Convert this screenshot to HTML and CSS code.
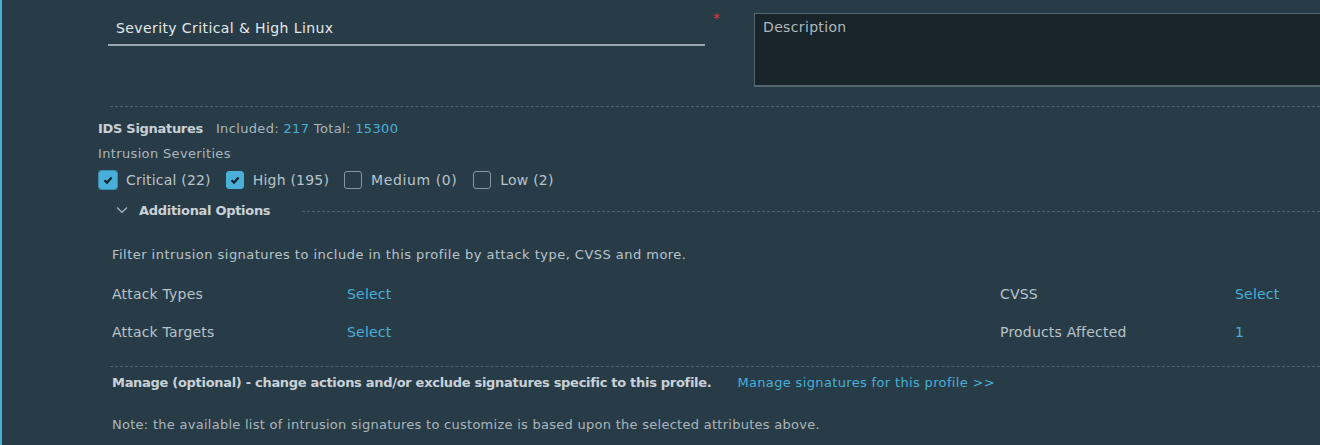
FILE: index.html
```html
<!DOCTYPE html>
<html>
<head>
<meta charset="utf-8">
<link rel="stylesheet" href="styles.css">
</head>
<body>
<div class="page">
  <div class="top">
    <div class="name-field">
      <div class="name-input">Severity Critical &amp; High Linux</div>
    </div>
    <span class="req">*</span>
    <div class="desc">Description</div>
  </div>
  <div class="dash dash-top"></div>

  <div class="ids">
    <div class="ids-head"><span class="ids-title">IDS Signatures</span><span class="ids-count">Included: <span class="num">217</span> Total: <span class="num">15300</span></span></div>
    <div class="sev-label">Intrusion Severities</div>
    <div class="checks">
      <label class="chk"><span class="box on focus"><svg viewBox="0 0 12 12"><path d="M2.5 6.3 L5 8.6 L9.6 3.6" /></svg></span>Critical (22)</label>
      <label class="chk"><span class="box on"><svg viewBox="0 0 12 12"><path d="M2.5 6.3 L5 8.6 L9.6 3.6" /></svg></span>High (195)</label>
      <label class="chk chk-wide"><span class="box"></span>Medium (0)</label>
      <label class="chk"><span class="box"></span>Low (2)</label>
    </div>
    <div class="addl">
      <svg class="chev" viewBox="0 0 12 8"><path d="M1 1.5 L6 6.3 L11 1.5"/></svg>
      <span class="addl-title">Additional Options</span>
      <span class="addl-line"></span>
    </div>
  </div>

  <div class="options">
    <p class="filter">Filter intrusion signatures to include in this profile by attack type, CVSS and more.</p>
    <div class="attrs">
      <span class="attr">Attack Types</span><a class="link">Select</a><span class="attr">CVSS</span><a class="link">Select</a>
      <span class="attr">Attack Targets</span><a class="link">Select</a><span class="attr">Products Affected</span><a class="link">1</a>
    </div>
    <div class="dash dash-manage"></div>
    <div class="manage"><span class="manage-text">Manage (optional) - change actions and/or exclude signatures specific to this profile.</span><a class="link">Manage signatures for this profile &gt;&gt;</a></div>
    <p class="note">Note: the available list of intrusion signatures to customize is based upon the selected attributes above.</p>
  </div>
</div>
</body>
</html>
```
FILE: styles.css
```css
* { box-sizing: border-box; }
html, body { margin: 0; padding: 0; }
body {
  width: 1320px;
  height: 445px;
  overflow: hidden;
  background: #283c47;
  font-family: "DejaVu Sans", "Noto Sans", sans-serif;
  font-size: 13px;
  letter-spacing: 0.35px;
  color: #c9d1d6;
}
.page {
  height: 445px;
  border-left: 2px solid #49afd9;
}
.top {
  display: flex;
  align-items: flex-start;
  padding-left: 106px;
  padding-top: 13px;
}
.name-field {
  width: 597px;
  padding-top: 4px;
}
.name-input {
  font-size: 14px;
  letter-spacing: 0.4px;
  color: #e4e8eb;
  padding: 0 0 5px 8px;
  line-height: 22px;
  border-bottom: 2px solid #9aa6ad;
}
.req {
  color: #d63b3b;
  font-size: 14px;
  line-height: 10px;
  margin-left: 8px;
  width: 41px;
}
.desc {
  flex: 1;
  height: 74px;
  background: #19242b;
  border: 1px solid #56666f;
  border-bottom-width: 2px;
  border-right: none;
  padding: 4px 8px;
  color: #aeb8be;
  font-size: 14px;
  line-height: 18px;
}
.dash {
  height: 0;
  border-top: 1px dashed #4f626d;
}
.dash-top {
  margin: 19px 0 0 108px;
}
.ids {
  padding-left: 96px;
  padding-top: 12px;
}
.ids-head {
  line-height: 20px;
  display: flex;
  gap: 13px;
}
.ids-title {
  font-weight: bold;
  letter-spacing: -0.3px;
  color: #c9d1d6;
}
.ids-count { color: #aab6bd; }
.num { color: #49afd9; }
.sev-label {
  margin-top: 5px;
  line-height: 20px;
  color: #aab6bd;
}
.checks {
  display: flex;
  align-items: center;
  margin-top: 5px;
  height: 22px;
}
.chk {
  display: flex;
  align-items: center;
  font-size: 14px;
  letter-spacing: 0.2px;
  color: #b8c3ca;
  margin-right: 15px;
}
.chk-wide {
  letter-spacing: 0.6px;
  margin-right: 16px;
}
.box {
  width: 18px;
  height: 18px;
  border: 1px solid #8a979e;
  border-radius: 3px;
  margin-right: 9px;
  display: flex;
  align-items: center;
  justify-content: center;
}
.box.on {
  background: #49afd9;
  border-color: #49afd9;
}
.box.focus {
  box-shadow: 0 0 0 1px #3b8ab0;
  margin-left: 1px;
}
.box svg {
  width: 12px;
  height: 12px;
  fill: none;
  stroke: #17232a;
  stroke-width: 2.2;
}
.addl {
  display: flex;
  align-items: center;
  height: 22px;
  margin-top: 8px;
  padding-left: 18px;
}
.chev {
  width: 12px;
  height: 8px;
  fill: none;
  stroke: #a9b4ba;
  stroke-width: 1.2;
  margin-right: 11px;
}
.addl-title {
  font-weight: bold;
  letter-spacing: -0.3px;
  color: #c9d1d6;
  font-size: 13px;
}
.addl-line {
  flex: 1;
  border-top: 1px dashed #4f626d;
  margin-left: 32px;
  margin-top: 2px;
}
.options {
  padding-left: 110px;
}
.filter {
  margin: 24px 0 0;
  line-height: 20px;
  letter-spacing: 0.47px;
  color: #b8c3ca;
}
.attrs {
  display: grid;
  grid-template-columns: 235px 653px 235px auto;
  row-gap: 18px;
  margin-top: 19px;
  line-height: 20px;
  font-size: 14px;
  letter-spacing: 0.2px;
}
.attr { color: #b8c3ca; }
.link { color: #49afd9; }
.dash-manage {
  margin-top: 24px;
  margin-left: -2px;
}
.manage {
  margin-top: 6px;
  line-height: 20px;
  display: flex;
  gap: 26px;
}
.manage-text {
  font-weight: bold;
  letter-spacing: -0.3px;
  color: #c9d1d6;
}
.note {
  margin: 22px 0 0;
  line-height: 20px;
  letter-spacing: 0.27px;
  color: #aab6bd;
}
```
